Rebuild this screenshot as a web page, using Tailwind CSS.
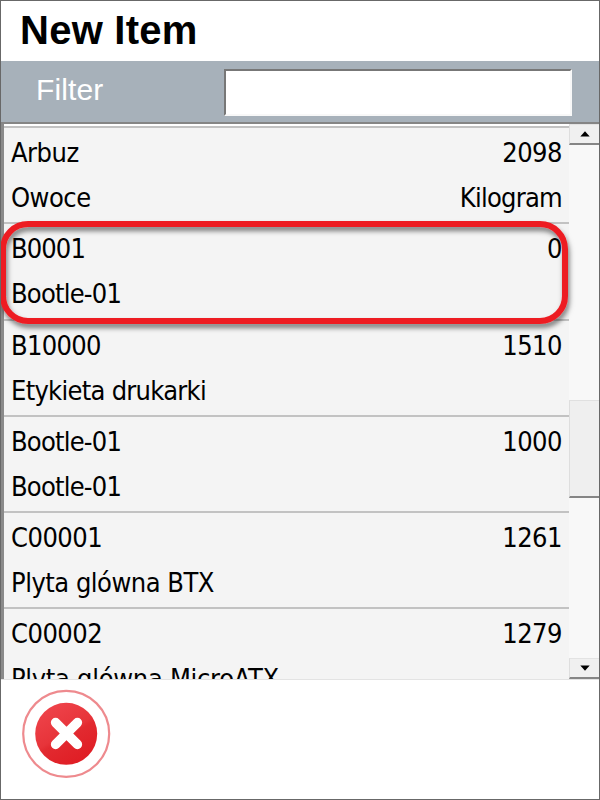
<!DOCTYPE html>
<html lang="pl">
<head>
<meta charset="utf-8">
<title>New Item</title>
<script src="https://cdn.jsdelivr.net/npm/@tailwindcss/browser@4"></script>
</head>
<body class="bg-white">
<div class="relative flex h-[800px] w-[600px] flex-col overflow-hidden border border-[#686868] bg-white font-['Liberation_Sans',sans-serif] text-black">
  <header class="flex h-[60px] shrink-0 items-start pl-[19px]">
    <h1 class="text-[40px] leading-[58px] font-bold tracking-[0.25px]">New Item</h1>
  </header>
  <div class="flex h-[61px] shrink-0 items-start justify-between bg-[#a7b1ba] pr-[27px] pl-[35px]">
    <label for="filter" class="pt-[11px] text-[30px] leading-[36px] tracking-[0.1px] text-white">Filter</label>
    <input id="filter" class="mt-[8px] h-[47px] w-[348px] border-2 border-t-[#777777] border-r-[#f8f8f8] border-b-[#f8f8f8] border-l-[#777777] bg-white px-2 outline-none">
  </div>
  <main class="flex h-[558px] shrink-0 border-t-2 border-b border-t-[#858585] border-b-[#e3e3e3]">
    <div class="h-full w-[568px] overflow-hidden border-l-3 border-[#8a8a8a] bg-white pt-[2px] font-['DejaVu_Sans_Condensed','DejaVu_Sans',sans-serif] text-[27px] leading-[45.2px] font-normal tracking-[-0.5px] [font-stretch:condensed]">
      <section class="h-[96.25px] border-t-2 border-[#c2c2c2] bg-[#f4f4f4] pt-[2px] pr-[7px] pl-[7px]">
        <div class="flex justify-between"><span>Arbuz</span><span>2098</span></div>
        <div class="flex justify-between"><span>Owoce</span><span class="tracking-[-0.75px]">Kilogram</span></div>
      </section>
      <section class="h-[96.25px] border-t-2 border-[#c2c2c2] bg-[#f4f4f4] pt-[2px] pr-[7px] pl-[7px]">
        <div class="flex justify-between"><span class="tracking-[-0.9px]">B0001</span><span>0</span></div>
        <div><span class="tracking-[-0.8px]">Bootle-01</span></div>
      </section>
      <section class="h-[96.25px] border-t-2 border-[#c2c2c2] bg-[#f4f4f4] pt-[2px] pr-[7px] pl-[7px]">
        <div class="flex justify-between"><span class="tracking-[-0.7px]">B10000</span><span>1510</span></div>
        <div><span class="tracking-[-0.72px]">Etykieta drukarki</span></div>
      </section>
      <section class="h-[96.25px] border-t-2 border-[#c2c2c2] bg-[#f4f4f4] pt-[2px] pr-[7px] pl-[7px]">
        <div class="flex justify-between"><span class="tracking-[-0.8px]">Bootle-01</span><span>1000</span></div>
        <div><span class="tracking-[-0.8px]">Bootle-01</span></div>
      </section>
      <section class="h-[96.25px] border-t-2 border-[#c2c2c2] bg-[#f4f4f4] pt-[2px] pr-[7px] pl-[7px]">
        <div class="flex justify-between"><span>C00001</span><span>1261</span></div>
        <div><span>Plyta glówna BTX</span></div>
      </section>
      <section class="h-[96.25px] border-t-2 border-[#c2c2c2] bg-[#f4f4f4] pt-[2px] pr-[7px] pl-[7px]">
        <div class="flex justify-between"><span>C00002</span><span>1279</span></div>
        <div><span class="tracking-[-0.3px]">Plyta glówna MicroATX</span></div>
      </section>
    </div>
    <div class="flex flex-1 flex-col bg-[#f8f8f8]">
      <div class="flex h-[21px] items-center justify-center border-t border-b-2 border-l border-t-[#e3e3e3] border-b-[#858585] border-l-[#dedede] bg-[#f0f0f0]">
        <svg width="10" height="6" viewBox="0 0 10 6"><path d="M5 .3 9.7 5.5H.3Z"/></svg>
      </div>
      <div class="h-[255px]"></div>
      <div class="h-[98px] border-t border-b-2 border-l border-t-[#e0e0e0] border-b-[#858585] border-l-[#dedede] bg-[#efefef]"></div>
      <div class="flex-1"></div>
      <div class="flex h-[21px] items-center justify-center border-t border-b-2 border-l border-t-[#e3e3e3] border-b-[#858585] border-l-[#dedede] bg-[#f0f0f0]">
        <svg width="10" height="6" viewBox="0 0 10 6"><path d="M.3.5H9.7L5 5.7Z"/></svg>
      </div>
    </div>
  </main>
  <footer class="pt-[9px] pl-[20px]">
    <button aria-label="Cancel" class="block">
      <svg width="90" height="90" viewBox="0 0 90 90">
        <defs><linearGradient id="red" x1=".2" y1=".1" x2=".7" y2=".95"><stop stop-color="#ee4249"/><stop offset=".48" stop-color="#e7343a"/><stop offset=".56" stop-color="#e22a30"/><stop offset="1" stop-color="#e01e25"/></linearGradient></defs>
        <circle cx="45.2" cy="44.8" r="43" fill="#fff" stroke="#ee8a8e" stroke-width="2.2"/>
        <circle cx="45.2" cy="44.8" r="31" fill="url(#red)"/>
        <path d="M34.6 33.6 56.4 55.4M56.4 33.6 34.6 55.4" stroke="#fff" stroke-width="9.5" stroke-linecap="round"/>
      </svg>
    </button>
  </footer>
  <svg class="pointer-events-none absolute -top-px -left-px" width="600" height="800" viewBox="0 0 600 800" fill="none">
    <defs><filter id="shade" x="-5%" y="-20%" width="110%" height="150%"><feDropShadow dx="1.5" dy="4" stdDeviation="2.5" flood-color="#000" flood-opacity=".5"/></filter></defs>
    <rect x="3" y="224" width="562" height="97" rx="25" stroke="#ed1c24" stroke-width="6" filter="url(#shade)"/>
  </svg>
</div>
</body>
</html>
